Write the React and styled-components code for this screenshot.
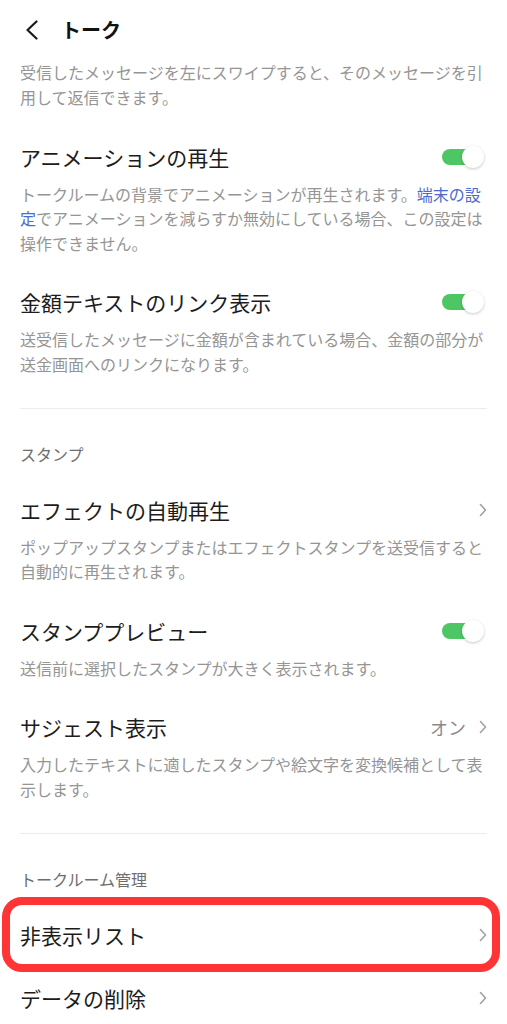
import React from 'react';
import styled, { createGlobalStyle } from 'styled-components';

const GlobalStyle = createGlobalStyle`
    body {
        margin: 0;
        background: #fff;
        font-family: "Noto Sans CJK JP", "Noto Sans", sans-serif;
        color: #1c1c1c;
    }
`;

const Page = styled.div`
    width: 507px;
    overflow: hidden;
`;

const Header = styled.header`
    display: flex;
    align-items: center;
    gap: 22px;
    height: 60px;
    padding-left: 25px;
`;

const HeaderTitle = styled.h1`
    margin: 0;
    font-size: 20px;
    font-weight: 700;
    line-height: 28px;
    color: #111;
`;

const Section = styled.section`
    padding-bottom: ${p => p.$last ? '0' : '16px'};
`;

const Divider = styled.hr`
    margin: 0 20px;
    border: none;
    border-top: 1px solid #ececec;
`;

const SectionTitle = styled.h2`
    margin: 0;
    padding: 35px 20px 14.5px;
    font-size: 16px;
    font-weight: 400;
    line-height: 20px;
    color: #6e6e6e;
`;

const Item = styled.div`
    position: relative;
    padding: 15.5px 20px;
`;

const Row = styled.div`
    display: flex;
    align-items: center;
    justify-content: space-between;
`;

const Title = styled.div`
    font-size: 21px;
    line-height: 32px;
    color: #1c1c1c;
`;

const Desc = styled.p`
    margin: 9px 0 0;
    font-size: 16px;
    line-height: 24.5px;
    color: #959595;
`;

const TopDesc = styled(Desc)`
    margin: 0;
    padding: 0 20px 16px;
`;

const Link = styled.span`
    color: #4a6bd3;
`;

const Trailing = styled.div`
    display: flex;
    align-items: center;
    gap: 13px;
`;

const Value = styled.span`
    font-size: 18px;
    line-height: 24px;
    color: #8a8a8a;
`;

const ToggleBox = styled.div`
    position: relative;
    width: 42px;
    height: 22px;
    margin-right: 3px;
`;

const Track = styled.div`
    position: absolute;
    top: 3px;
    bottom: 3px;
    left: 0;
    right: 2px;
    border-radius: 8px;
    background: #4cc764;
`;

const Knob = styled.div`
    position: absolute;
    top: 0;
    right: 0;
    width: 22px;
    height: 22px;
    border-radius: 50%;
    background: #fff;
    box-shadow: 0 1px 3px rgba(0, 0, 0, 0.22);
`;

const Highlight = styled.div`
    position: absolute;
    top: -6.5px;
    bottom: -5.5px;
    left: 2px;
    right: 7px;
    border: 8px solid #ff3535;
    border-radius: 20px;
    pointer-events: none;
`;

const BackIcon = () => (
    <svg width="14" height="20" viewBox="0 0 14 20">
        <polyline points="11.5,1.5 2.5,10 11.5,18.5" fill="none" stroke="#1a1a1a" strokeWidth="2.2" strokeLinecap="round" strokeLinejoin="round" />
    </svg>
);

const Chevron = () => (
    <svg width="8" height="14" viewBox="0 0 8 14">
        <polyline points="1.5,1.5 6.5,7 1.5,12.5" fill="none" stroke="#a2a2a2" strokeWidth="1.6" strokeLinecap="round" strokeLinejoin="round" />
    </svg>
);

const Toggle = () => (
    <ToggleBox>
        <Track />
        <Knob />
    </ToggleBox>
);

const Setting = ({ title, desc, toggle, value, chevron, highlighted }) => (
    <Item>
        <Row>
            <Title>{title}</Title>
            {toggle && <Toggle />}
            {chevron && (
                <Trailing>
                    {value && <Value>{value}</Value>}
                    <Chevron />
                </Trailing>
            )}
        </Row>
        {desc && <Desc>{desc}</Desc>}
        {highlighted && <Highlight />}
    </Item>
);

export default function App() {
    return (
        <Page>
            <GlobalStyle />
            <Header>
                <BackIcon />
                <HeaderTitle>トーク</HeaderTitle>
            </Header>

            <Section>
                <TopDesc>受信したメッセージを左にスワイプすると、そのメッセージを引用して返信できます。</TopDesc>
                <Setting
                    title="アニメーションの再生"
                    toggle
                    desc={<>トークルームの背景でアニメーションが再生されます。<Link>端末の設定</Link>でアニメーションを減らすか無効にしている場合、この設定は操作できません。</>}
                />
                <Setting
                    title="金額テキストのリンク表示"
                    toggle
                    desc="送受信したメッセージに金額が含まれている場合、金額の部分が送金画面へのリンクになります。"
                />
            </Section>

            <Divider />
            <Section>
                <SectionTitle>スタンプ</SectionTitle>
                <Setting
                    title="エフェクトの自動再生"
                    chevron
                    desc="ポップアップスタンプまたはエフェクトスタンプを送受信すると自動的に再生されます。"
                />
                <Setting
                    title="スタンププレビュー"
                    toggle
                    desc="送信前に選択したスタンプが大きく表示されます。"
                />
                <Setting
                    title="サジェスト表示"
                    chevron
                    value="オン"
                    desc="入力したテキストに適したスタンプや絵文字を変換候補として表示します。"
                />
            </Section>

            <Divider />
            <Section $last>
                <SectionTitle>トークルーム管理</SectionTitle>
                <Setting title="非表示リスト" chevron highlighted />
                <Setting title="データの削除" chevron />
            </Section>
        </Page>
    );
}
